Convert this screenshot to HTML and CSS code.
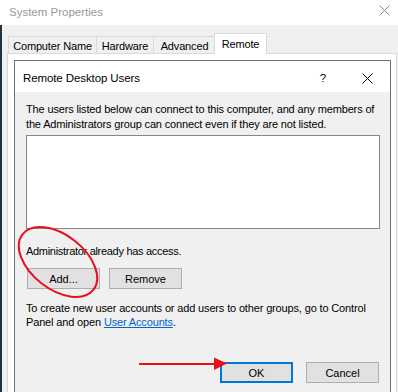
FILE: index.html
```html
<!DOCTYPE html>
<html>
<head>
<meta charset="utf-8">
<link rel="stylesheet" href="styles.css">
</head>
<body>
<div class="titlebar">
  <span class="title">System Properties</span>
  <svg class="win-close" width="11" height="11" viewBox="0 0 11 11"><path d="M0.5 0.5L10.5 10.5M10.5 0.5L0.5 10.5" stroke="#8a8a8a" stroke-width="1" fill="none"/></svg>
</div>
<div class="main">
  <div class="desk"></div>
  <div class="content">
    <div class="tabs">
      <div class="tab tab-cn">Computer Name</div>
      <div class="tab tab-hw">Hardware</div>
      <div class="tab tab-adv">Advanced</div>
      <div class="tab tab-remote active">Remote</div>
    </div>
    <div class="panel">
      <div class="dialog">
        <div class="dlg-title">
          <span class="dlg-name">Remote Desktop Users</span>
          <span class="help">?</span>
          <svg class="dlg-close" width="11" height="11" viewBox="0 0 11 11"><path d="M0.5 0.5L10.5 10.5M10.5 0.5L0.5 10.5" stroke="#000" stroke-width="1" fill="none"/></svg>
        </div>
        <div class="dlg-body">
          <p class="intro">The users listed below can connect to this computer, and any members of<br>the Administrators group can connect even if they are not listed.</p>
          <div class="listbox"></div>
          <p class="status">Administrator already has access.</p>
          <div class="btn-row">
            <button class="btn">Add...</button>
            <button class="btn">Remove</button>
          </div>
          <p class="note">To create new user accounts or add users to other groups, go to Control<br>Panel and open <a class="link" href="#">User Accounts</a>.</p>
          <div class="footer">
            <button class="btn btn-default">OK</button>
            <button class="btn">Cancel</button>
          </div>
        </div>
      </div>
    </div>
  </div>
</div>
<svg class="annot" width="398" height="392" viewBox="0 0 398 392">
  <ellipse cx="58" cy="262" rx="45" ry="27" transform="rotate(38 58 262)" fill="none" stroke="#e8101c" stroke-width="2"/>
  <line x1="139" y1="364" x2="217" y2="364" stroke="#e8101c" stroke-width="2"/>
  <polygon points="214,357.5 227,363.5 214,370" fill="#e8101c"/>
</svg>
</body>
</html>
```
FILE: styles.css
```css
* { box-sizing: border-box; }
html, body { margin: 0; padding: 0; }
body {
  width: 398px;
  height: 392px;
  overflow: hidden;
  position: relative;
  background: #f0f0f0;
  font-family: "Liberation Sans", Arial, sans-serif;
  font-size: 11px;
  color: #000;
}
.titlebar {
  height: 25px;
  background: #fff;
  display: flex;
  align-items: center;
  padding-left: 9px;
  padding-right: 8px;
}
.title {
  flex: 1;
  color: #999;
  font-size: 11.5px;
  padding-bottom: 1px;
}
.win-close { margin-bottom: 4px; }
.main {
  display: flex;
  height: 367px;
}
.desk {
  width: 2px;
  background: #1d3446;
}
.content {
  flex: 1;
  display: flex;
  flex-direction: column;
  padding-left: 5px;
  padding-top: 8px;
}
.tabs {
  display: flex;
  align-items: flex-end;
  height: 21px;
  margin-left: 1px;
}
.tab {
  height: 17px;
  margin-bottom: 1px;
  margin-right: -1px;
  border: 1px solid #d9d9d9;
  border-bottom: none;
  background: #f0f0f0;
  display: flex;
  align-items: center;
  justify-content: center;
  padding-top: 1px;
  white-space: nowrap;
  letter-spacing: -0.15px;
}
.tab-cn { width: 89px; }
.tab-hw { width: 58px; }
.tab-adv { width: 63px; }
.tab-remote { width: 53px; margin-left: -1px; }
.tab.active {
  height: 21px;
  margin-bottom: 0;
  background: #fff;
  position: relative;
  z-index: 1;
  padding-top: 0;
}
.panel {
  margin-top: -1px;
  width: 390px;
  flex: 1;
  background: #fff;
  border: 1px solid #d9d9d9;
  border-bottom: none;
  padding: 6px 5px 0 6px;
  display: flex;
  flex-direction: column;
}
.dialog {
  flex: 1;
  border: 1px solid #707070;
  border-bottom: none;
  background: #f0f0f0;
  display: flex;
  flex-direction: column;
}
.dlg-title {
  height: 31px;
  background: #fff;
  display: flex;
  align-items: center;
  padding-left: 8px;
  padding-top: 3px;
  font-size: 11.5px;
}
.dlg-name { flex: 1; letter-spacing: -0.1px; }
.help {
  width: 12px;
  text-align: center;
  margin-right: 33px;
}
.dlg-close { margin-right: 17px; }
.dlg-body {
  flex: 1;
  padding: 10px 10px 0 11px;
  display: flex;
  flex-direction: column;
}
.intro {
  margin: 0;
  line-height: 15px;
  white-space: nowrap;
  letter-spacing: -0.15px;
}
.listbox {
  margin-top: 3px;
  height: 94px;
  border: 1px solid #828790;
  background: #fff;
}
.status {
  margin: 15px 0 0;
  line-height: 15px;
  letter-spacing: -0.3px;
}
.btn-row {
  margin-top: 9px;
  display: flex;
  gap: 9px;
  padding-left: 1px;
}
.btn {
  width: 73px;
  height: 21px;
  background: #e1e1e1;
  border: 1px solid #adadad;
  font-family: inherit;
  font-size: inherit;
  color: #000;
  padding: 0;
  margin: 0;
}
.btn-default {
  border: 2px solid #0078d7;
}
.note {
  margin: 12px 0 0;
  line-height: 14px;
  white-space: nowrap;
  letter-spacing: -0.15px;
}
.link { color: #0066cc; text-decoration: underline; }
.footer {
  margin-top: 33px;
  display: flex;
  justify-content: flex-end;
  gap: 13px;
  padding-right: 1px;
}
.annot {
  position: absolute;
  left: 0;
  top: 0;
  pointer-events: none;
}
```
